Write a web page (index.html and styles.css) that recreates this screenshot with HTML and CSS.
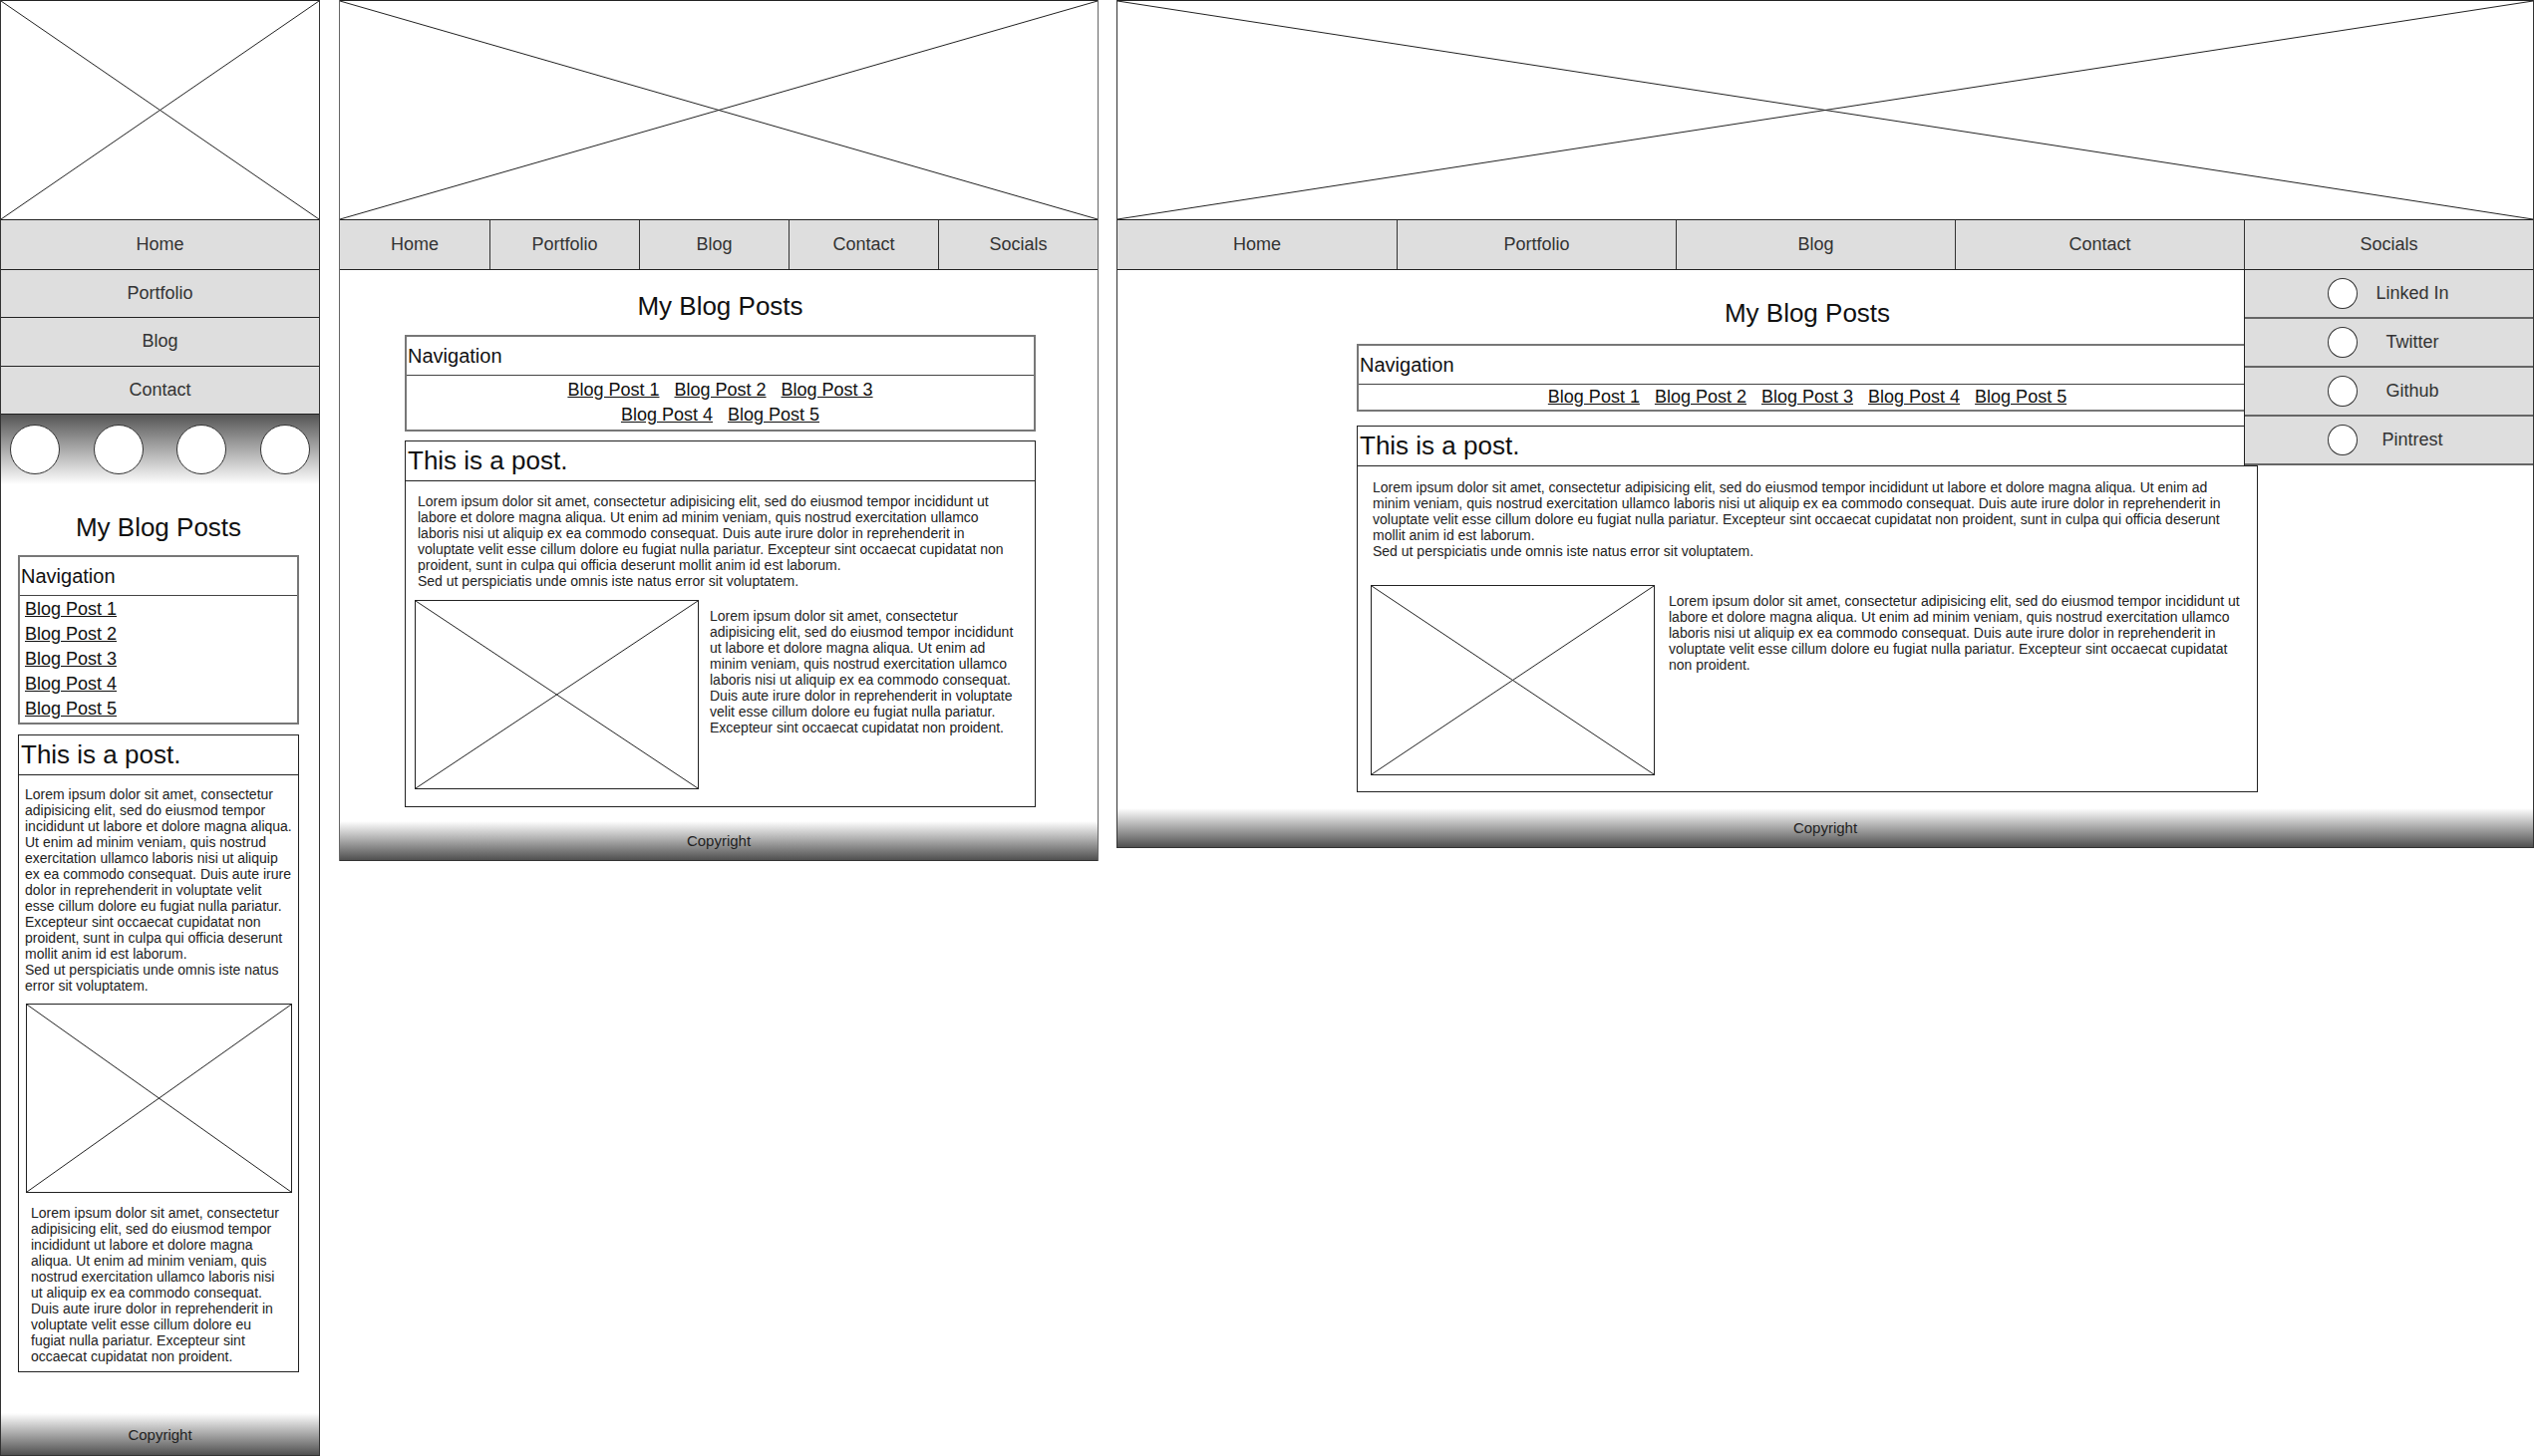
FILE: index.html
```html
<!DOCTYPE html>
<html lang="en">
<head>
    <meta charset="UTF-8">
    <meta name="viewport" content="width=device-width, initial-scale=1.0">
    <title>My Blog Posts - Wireframes</title>
    <link rel="stylesheet" href="styles.css">
</head>
<body>

<div class="board">

    <!-- phone -->
    <div class="frame frame-mobile">
        <div class="ph hero"><svg><line x1="0" y1="0" x2="100%" y2="100%"/><line x1="100%" y1="0" x2="0" y2="100%"/></svg></div>
        <nav class="menu menu-stack">
            <a href="#">Home</a>
            <a href="#">Portfolio</a>
            <a href="#">Blog</a>
            <a href="#">Contact</a>
        </nav>
        <div class="social-band">
            <span class="dot"></span>
            <span class="dot"></span>
            <span class="dot"></span>
            <span class="dot"></span>
        </div>
        <div class="column">
            <h1 class="title">My Blog Posts</h1>
            <section class="navbox">
                <div class="navbox-head">Navigation</div>
                <div class="navbox-links">
                    <a href="#">Blog Post 1</a>
                    <a href="#">Blog Post 2</a>
                    <a href="#">Blog Post 3</a>
                    <a href="#">Blog Post 4</a>
                    <a href="#">Blog Post 5</a>
                </div>
            </section>
            <article class="post">
                <h2 class="post-head">This is a post.</h2>
                <div class="post-body">
                    <p class="post-text">Lorem ipsum dolor sit amet, consectetur adipisicing elit, sed do eiusmod tempor incididunt ut labore et dolore magna aliqua. Ut enim ad minim veniam, quis nostrud exercitation ullamco laboris nisi ut aliquip ex ea commodo consequat. Duis aute irure dolor in reprehenderit in voluptate velit esse cillum dolore eu fugiat nulla pariatur. Excepteur sint occaecat cupidatat non proident, sunt in culpa qui officia deserunt mollit anim id est laborum.<br>Sed ut perspiciatis unde omnis iste natus error sit voluptatem.</p>
                    <div class="post-media">
                        <div class="ph media-img"><svg><line x1="0" y1="0" x2="100%" y2="100%"/><line x1="100%" y1="0" x2="0" y2="100%"/></svg></div>
                        <p class="media-text">Lorem ipsum dolor sit amet, consectetur adipisicing elit, sed do eiusmod tempor incididunt ut labore et dolore magna aliqua. Ut enim ad minim veniam, quis nostrud exercitation ullamco laboris nisi ut aliquip ex ea commodo consequat. Duis aute irure dolor in reprehenderit in voluptate velit esse cillum dolore eu fugiat nulla pariatur. Excepteur sint occaecat cupidatat non proident.</p>
                    </div>
                </div>
            </article>
        </div>
        <footer class="foot">Copyright</footer>
    </div>

    <!-- tablet -->
    <div class="frame frame-tablet">
        <div class="ph hero"><svg><line x1="0" y1="0" x2="100%" y2="100%"/><line x1="100%" y1="0" x2="0" y2="100%"/></svg></div>
        <nav class="menu menu-row">
            <a href="#">Home</a>
            <a href="#">Portfolio</a>
            <a href="#">Blog</a>
            <a href="#">Contact</a>
            <a href="#">Socials</a>
        </nav>
        <div class="column">
            <h1 class="title">My Blog Posts</h1>
            <section class="navbox">
                <div class="navbox-head">Navigation</div>
                <div class="navbox-links">
                    <a href="#">Blog Post 1</a>
                    <a href="#">Blog Post 2</a>
                    <a href="#">Blog Post 3</a>
                    <a href="#">Blog Post 4</a>
                    <a href="#">Blog Post 5</a>
                </div>
            </section>
            <article class="post">
                <h2 class="post-head">This is a post.</h2>
                <div class="post-body">
                    <p class="post-text">Lorem ipsum dolor sit amet, consectetur adipisicing elit, sed do eiusmod tempor incididunt ut labore et dolore magna aliqua. Ut enim ad minim veniam, quis nostrud exercitation ullamco laboris nisi ut aliquip ex ea commodo consequat. Duis aute irure dolor in reprehenderit in voluptate velit esse cillum dolore eu fugiat nulla pariatur. Excepteur sint occaecat cupidatat non proident, sunt in culpa qui officia deserunt mollit anim id est laborum.<br>Sed ut perspiciatis unde omnis iste natus error sit voluptatem.</p>
                    <div class="post-media">
                        <div class="ph media-img"><svg><line x1="0" y1="0" x2="100%" y2="100%"/><line x1="100%" y1="0" x2="0" y2="100%"/></svg></div>
                        <p class="media-text">Lorem ipsum dolor sit amet, consectetur adipisicing elit, sed do eiusmod tempor incididunt ut labore et dolore magna aliqua. Ut enim ad minim veniam, quis nostrud exercitation ullamco laboris nisi ut aliquip ex ea commodo consequat. Duis aute irure dolor in reprehenderit in voluptate velit esse cillum dolore eu fugiat nulla pariatur. Excepteur sint occaecat cupidatat non proident.</p>
                    </div>
                </div>
            </article>
        </div>
        <footer class="foot">Copyright</footer>
    </div>

    <!-- desktop -->
    <div class="frame frame-desktop">
        <div class="ph hero"><svg><line x1="0" y1="0" x2="100%" y2="100%"/><line x1="100%" y1="0" x2="0" y2="100%"/></svg></div>
        <nav class="menu menu-row">
            <a href="#">Home</a>
            <a href="#">Portfolio</a>
            <a href="#">Blog</a>
            <a href="#">Contact</a>
            <div class="has-drop">
                Socials
                <div class="drop">
                    <div class="drop-item"><span class="dot"></span><span class="drop-label">Linked In</span></div>
                    <div class="drop-item"><span class="dot"></span><span class="drop-label">Twitter</span></div>
                    <div class="drop-item"><span class="dot"></span><span class="drop-label">Github</span></div>
                    <div class="drop-item"><span class="dot"></span><span class="drop-label">Pintrest</span></div>
                </div>
            </div>
        </nav>
        <div class="column">
            <h1 class="title">My Blog Posts</h1>
            <section class="navbox">
                <div class="navbox-head">Navigation</div>
                <div class="navbox-links">
                    <a href="#">Blog Post 1</a>
                    <a href="#">Blog Post 2</a>
                    <a href="#">Blog Post 3</a>
                    <a href="#">Blog Post 4</a>
                    <a href="#">Blog Post 5</a>
                </div>
            </section>
            <article class="post">
                <h2 class="post-head">This is a post.</h2>
                <div class="post-body">
                    <p class="post-text">Lorem ipsum dolor sit amet, consectetur adipisicing elit, sed do eiusmod tempor incididunt ut labore et dolore magna aliqua. Ut enim ad minim veniam, quis nostrud exercitation ullamco laboris nisi ut aliquip ex ea commodo consequat. Duis aute irure dolor in reprehenderit in voluptate velit esse cillum dolore eu fugiat nulla pariatur. Excepteur sint occaecat cupidatat non proident, sunt in culpa qui officia deserunt mollit anim id est laborum.<br>Sed ut perspiciatis unde omnis iste natus error sit voluptatem.</p>
                    <div class="post-media">
                        <div class="ph media-img"><svg><line x1="0" y1="0" x2="100%" y2="100%"/><line x1="100%" y1="0" x2="0" y2="100%"/></svg></div>
                        <p class="media-text">Lorem ipsum dolor sit amet, consectetur adipisicing elit, sed do eiusmod tempor incididunt ut labore et dolore magna aliqua. Ut enim ad minim veniam, quis nostrud exercitation ullamco laboris nisi ut aliquip ex ea commodo consequat. Duis aute irure dolor in reprehenderit in voluptate velit esse cillum dolore eu fugiat nulla pariatur. Excepteur sint occaecat cupidatat non proident.</p>
                    </div>
                </div>
            </article>
        </div>
        <footer class="foot">Copyright</footer>
    </div>

</div>

</body>
</html>
```

FILE: styles.css
```css
* {
    box-sizing: border-box;
}
body {
    margin: 0;
    font-family: "Liberation Sans", Arial, sans-serif;
    color: #222;
    background: #fff;
}
.board {
    display: flex;
    align-items: flex-start;
}

/* frames */
.frame {
    position: relative;
    display: flex;
    flex-direction: column;
    border-left: 1px solid #333;
    border-right: 1px solid #333;
}
.frame-mobile {
    width: 321px;
    height: 100vh;
}
.frame-tablet {
    width: 762px;
    margin-left: 19px;
    border-color: #666;
}
.frame-desktop {
    width: 1422px;
    margin-left: 18px;
}

/* image placeholders */
.ph {
    border: 1px solid #222;
    background: #fff;
}
.ph svg {
    display: block;
    width: 100%;
    height: 100%;
}
.ph line {
    stroke: #222;
    stroke-width: 1;
}
.hero {
    height: 220px;
    border-width: 1px 0 0;
}

/* top menu */
.menu {
    display: grid;
    background: #dedede;
    border-top: 1px solid #222;
    border-bottom: 1px solid #222;
}
.menu a,
.has-drop {
    display: flex;
    align-items: center;
    justify-content: center;
    color: #333;
    font-size: 18px;
    text-decoration: none;
}
.menu-stack a {
    height: 48.5px;
}
.menu-stack a + a {
    border-top: 1px solid #222;
}
.menu-row {
    grid-auto-flow: column;
    height: 51px;
}
.menu-row > * + * {
    border-left: 1px solid #333;
}
.frame-tablet .menu-row {
    grid-template-columns: repeat(4, 150px) 1fr;
}
.frame-desktop .menu-row {
    grid-template-columns: repeat(3, 280px) 290px 1fr;
}

.social-band {
    height: 70px;
    display: flex;
    align-items: center;
    justify-content: space-between;
    padding: 0 9px;
    background: linear-gradient(#555, #fff);
}
.dot {
    display: block;
    flex: none;
    width: 50px;
    height: 50px;
    border-radius: 50%;
    border: 1px solid #333;
    background: #fff;
}

/* socials dropdown */
.has-drop {
    position: relative;
}
.drop {
    position: absolute;
    top: calc(100% + 1px);
    left: -1px;
    right: 0;
    background: #dedede;
    border-left: 1px solid #222;
}
.drop-item {
    display: flex;
    align-items: center;
    height: 49px;
    border-bottom: 2px solid #666;
}
.drop-item .dot {
    width: 30px;
    height: 31px;
    margin-left: 83px;
}
.drop-label {
    width: 110px;
    text-align: center;
}

/* content column */
.column {
    display: flex;
    flex-direction: column;
}
.title {
    margin: 0;
    font-size: 26px;
    line-height: 30px;
    font-weight: normal;
    text-align: center;
    color: #111;
}
.navbox {
    border: 2px solid #777;
}
.navbox-head {
    height: 39px;
    display: flex;
    align-items: center;
    padding-left: 1px;
    font-size: 20px;
    color: #111;
    border-bottom: 1px solid #444;
}
.navbox-links {
    display: flex;
    flex-wrap: wrap;
    font-size: 18px;
    line-height: 25px;
}
.navbox-links a {
    color: #111;
}
.post {
    border: 1px solid #222;
}
.post-head {
    margin: 0;
    height: 40px;
    display: flex;
    align-items: center;
    padding-left: 2px;
    font-size: 26px;
    font-weight: normal;
    color: #111;
    border-bottom: 1px solid #222;
}
.post-body {
    font-size: 14px;
    line-height: 16px;
    color: #222;
}
.post-body p {
    margin: 0;
}
.post-media {
    display: flex;
}
.media-img {
    flex: none;
}

.foot {
    height: 40px;
    display: flex;
    align-items: center;
    justify-content: center;
    font-size: 15px;
    color: #222;
    background: linear-gradient(#fff, #505050);
    border-bottom: 1px solid #333;
}

/* phone */
.frame-mobile .column {
    margin: 28px 0 0 17px;
    width: 282px;
}
.frame-mobile .title {
    margin-bottom: 13px;
}
.frame-mobile .navbox-links {
    flex-direction: column;
    align-items: flex-start;
    padding: 1px 5px;
}
.frame-mobile .post {
    margin-top: 10px;
}
.frame-mobile .post-body {
    padding: 11px 5px 7px 6px;
}
.frame-mobile .post-media {
    flex-direction: column;
    margin-top: 10px;
}
.frame-mobile .media-img {
    width: 267px;
    height: 190px;
    margin-left: 1px;
}
.frame-mobile .media-text {
    margin: 12px 0 0 6px;
    width: 252px;
}
.frame-mobile .foot {
    margin-top: auto;
    height: 43px;
}

/* tablet */
.frame-tablet .column {
    margin: 21px 0 0 65px;
    width: 633px;
}
.frame-tablet .title {
    margin-bottom: 14px;
}
.frame-tablet .navbox-links {
    justify-content: center;
    column-gap: 15px;
    padding: 2px 144px;
}
.frame-tablet .post {
    margin: 9px 0 14px;
}
.frame-tablet .post-body {
    padding: 12px 13px 17px 9px;
}
.frame-tablet .post-text {
    margin-left: 3px;
}
.frame-tablet .post-media {
    margin-top: 11px;
}
.frame-tablet .media-img {
    width: 285px;
    height: 190px;
}
.frame-tablet .media-text {
    margin: 8px 0 0 11px;
}

/* desktop */
.frame-desktop .column {
    margin: 28px 0 0 240px;
    width: 904px;
}
.frame-desktop .title {
    margin-bottom: 16px;
}
.frame-desktop .navbox-links {
    justify-content: center;
    column-gap: 15px;
}
.frame-desktop .post {
    margin: 14px 0 16px;
}
.frame-desktop .post-body {
    padding: 13px 14px 16px 13px;
}
.frame-desktop .post-text {
    margin-left: 2px;
}
.frame-desktop .post-media {
    margin-top: 26px;
}
.frame-desktop .media-img {
    width: 285px;
    height: 191px;
}
.frame-desktop .media-text {
    margin: 8px 0 0 14px;
}
```
